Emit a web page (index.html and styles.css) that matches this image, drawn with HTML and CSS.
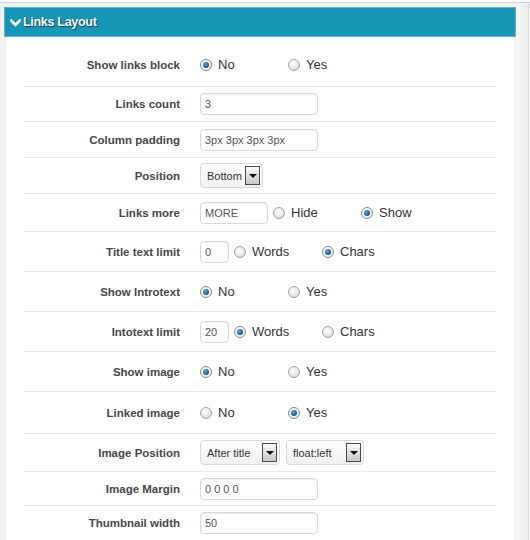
FILE: index.html
```html
<!DOCTYPE html>
<html>
<head>
<meta charset="utf-8">
<link rel="stylesheet" href="styles.css">
</head>
<body>
<div class="topbar"></div>
<div class="wrap">
  <div class="panel">
    <div class="header">
      <svg class="chev" width="11" height="8" viewBox="0 0 11 8"><path d="M1.2 1.5 L5.5 6 L9.8 1.5" fill="none" stroke="#fff" stroke-width="2.6" stroke-linecap="round" stroke-linejoin="round"/></svg>
      <span class="title">Links Layout</span>
    </div>
    <div class="content">
      <div class="row h44">
        <div class="label">Show links block</div>
        <div class="ctrl">
          <label class="opt"><span class="radio on"></span>No</label>
          <label class="opt"><span class="radio"></span>Yes</label>
        </div>
      </div>
      <div class="row h35">
        <div class="label">Links count</div>
        <div class="ctrl"><span class="input w118">3</span></div>
      </div>
      <div class="row h36">
        <div class="label">Column padding</div>
        <div class="ctrl"><span class="input w118">3px 3px 3px 3px</span></div>
      </div>
      <div class="row h36">
        <div class="label">Position</div>
        <div class="ctrl"><span class="select w63">Bottom<span class="arrow"></span></span></div>
      </div>
      <div class="row h38">
        <div class="label">Links more</div>
        <div class="ctrl">
          <span class="input w68">MORE</span>
          <label class="opt after"><span class="radio"></span>Hide</label>
          <label class="opt"><span class="radio on"></span>Show</label>
        </div>
      </div>
      <div class="row h40">
        <div class="label">Title text limit</div>
        <div class="ctrl">
          <span class="input w29">0</span>
          <label class="opt after"><span class="radio"></span>Words</label>
          <label class="opt"><span class="radio on"></span>Chars</label>
        </div>
      </div>
      <div class="row h40">
        <div class="label">Show Introtext</div>
        <div class="ctrl">
          <label class="opt"><span class="radio on"></span>No</label>
          <label class="opt"><span class="radio"></span>Yes</label>
        </div>
      </div>
      <div class="row h40">
        <div class="label">Intotext limit</div>
        <div class="ctrl">
          <span class="input w29">20</span>
          <label class="opt after"><span class="radio on"></span>Words</label>
          <label class="opt"><span class="radio"></span>Chars</label>
        </div>
      </div>
      <div class="row h40">
        <div class="label">Show image</div>
        <div class="ctrl">
          <label class="opt"><span class="radio on"></span>No</label>
          <label class="opt"><span class="radio"></span>Yes</label>
        </div>
      </div>
      <div class="row h42">
        <div class="label">Linked image</div>
        <div class="ctrl">
          <label class="opt"><span class="radio"></span>No</label>
          <label class="opt"><span class="radio on"></span>Yes</label>
        </div>
      </div>
      <div class="row h38">
        <div class="label">Image Position</div>
        <div class="ctrl">
          <span class="select w80">After title<span class="arrow"></span></span>
          <span class="select w78 gap">float:left<span class="arrow"></span></span>
        </div>
      </div>
      <div class="row h34">
        <div class="label">Image Margin</div>
        <div class="ctrl"><span class="input w118">0 0 0 0</span></div>
      </div>
      <div class="row h35">
        <div class="label">Thumbnail width</div>
        <div class="ctrl"><span class="input w118">50</span></div>
      </div>
    </div>
  </div>
  <div class="gutter"></div>
</div>
</body>
</html>
```
FILE: styles.css
```css
html, body {
  margin: 0;
  padding: 0;
}
body {
  background: #f3f3f3;
  font-family: "Liberation Sans", Arial, sans-serif;
  width: 530px;
  height: 540px;
  overflow: hidden;
}
.topbar {
  height: 2px;
  background: #fafbfc;
  border-bottom: 1px solid #c9d5e1;
}
.wrap {
  display: flex;
  align-items: flex-start;
}
.panel {
  width: 512px;
  margin-left: 4px;
  margin-top: 4px;
}
.header {
  height: 30px;
  box-sizing: border-box;
  background: #1697b5;
  border: 1px solid #5cb4ca;
  display: flex;
  align-items: center;
  padding-left: 5px;
  color: #fff;
}
.chev {
  margin-right: 2px;
  margin-top: 1px;
}
.title {
  font-weight: bold;
  font-size: 12.5px;
  letter-spacing: -0.3px;
  text-shadow: 0 0 1px #0a4a5a, 1px 1px 1px rgba(0,0,0,0.5);
}
.content {
  background: #fff;
  margin: 0 2px;
  padding: 6px 18px 0 18px;
  height: 520px;
}
.row {
  display: flex;
  align-items: center;
  box-sizing: border-box;
  border-bottom: 1px solid #e9e9e9;
}
.h34 { height: 34px; }
.h35 { height: 35px; }
.h36 { height: 36px; }
.h38 { height: 38px; }
.h40 { height: 40px; }
.h42 { height: 42px; }
.h44 { height: 44px; }
.label {
  width: 156px;
  text-align: right;
  font-weight: bold;
  font-size: 11.5px;
  color: #474747;
}
.ctrl {
  margin-left: 20px;
  display: flex;
  align-items: center;
}
.opt {
  width: 88px;
  display: flex;
  align-items: center;
  font-size: 13px;
  color: #333;
}
.opt.after {
  margin-left: 5px;
}
.radio {
  width: 12px;
  height: 12px;
  box-sizing: border-box;
  border-radius: 50%;
  border: 1px solid #a4a4a4;
  background: radial-gradient(circle at 40% 35%, #ffffff 0%, #e8e8e8 55%, #cfcfcf 100%);
  margin-right: 6px;
  position: relative;
  flex: none;
}
.radio.on {
  border-color: #8a8a8a;
  background: radial-gradient(circle at 40% 35%, #ffffff 0%, #e6e6e6 100%);
}
.radio.on::after {
  content: "";
  position: absolute;
  left: 2px;
  top: 2px;
  width: 6px;
  height: 6px;
  border-radius: 50%;
  background: radial-gradient(circle at 40% 35%, #6ab0e0 0%, #1f6aa3 50%, #123e66 100%);
}
.input {
  height: 22px;
  box-sizing: border-box;
  border: 1px solid #d9d9d9;
  border-radius: 4px;
  box-shadow: inset 0 1px 2px rgba(0,0,0,0.07);
  padding: 0 4px;
  font-size: 11px;
  color: #555;
  display: flex;
  align-items: center;
  background: #fff;
}
.w118 { width: 118px; }
.w68 { width: 68px; }
.w29 { width: 29px; }
.select {
  height: 25px;
  box-sizing: border-box;
  border: 1px solid #d8d8d8;
  border-radius: 4px;
  background: linear-gradient(#ffffff, #f1f1f1);
  display: flex;
  align-items: center;
  justify-content: space-between;
  padding: 0 2px 0 6px;
  font-size: 11px;
  color: #333;
}
.w63 { width: 63px; }
.w80 { width: 80px; }
.w78 { width: 78px; }
.select.gap { margin-left: 6px; }
.arrow {
  width: 15px;
  height: 19px;
  box-sizing: border-box;
  border: 1px solid #4a4a4a;
  background: linear-gradient(#fafafa, #c8c8c8);
  position: relative;
  flex: none;
}
.arrow::after {
  content: "";
  position: absolute;
  left: 3px;
  top: 7px;
  border-left: 4px solid transparent;
  border-right: 4px solid transparent;
  border-top: 4px solid #111;
}
.gutter {
  width: 12px;
  height: 540px;
  margin-left: 0;
  background: linear-gradient(90deg, #f7f7f7, #ececec);
  border-right: 1px solid #d8d8d8;
}
```
